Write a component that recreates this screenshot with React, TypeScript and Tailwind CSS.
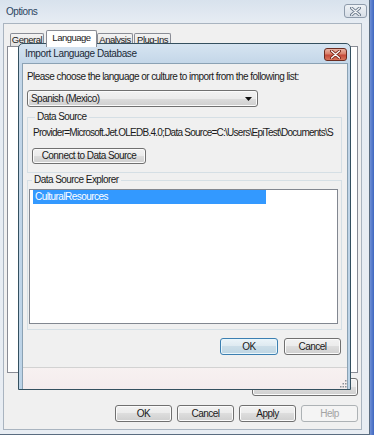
import React from 'react';

const btn =
  'flex items-center justify-center rounded-[3px] border border-[#707070] bg-[linear-gradient(to_bottom,#f2f2f2_0%,#ebebeb_50%,#dddddd_50%,#cfcfcf_100%)] shadow-[inset_0_0_0_1px_#fbfbfb] text-[#1a1a1a]';

const CloseGlyph = ({ fill, stroke }: { fill: string; stroke: string }) => (
  <svg width="11" height="9" viewBox="0 0 11 9">
    <path d="M1.5 1 L9.5 8 M9.5 1 L1.5 8" stroke={stroke} strokeWidth="3" strokeLinecap="round" />
    <path d="M1.5 1 L9.5 8 M9.5 1 L1.5 8" stroke={fill} strokeWidth="1.2" strokeLinecap="round" />
  </svg>
);

const Grip = () => (
  <svg width="7" height="9" viewBox="0 0 7 9">
    <rect x="5" y="1" width="1.5" height="1.5" fill="#8c9198" />
    <rect x="2.5" y="4" width="1.5" height="1.5" fill="#8c9198" />
    <rect x="5" y="4" width="1.5" height="1.5" fill="#8c9198" />
    <rect x="0" y="7" width="1.5" height="1.5" fill="#8c9198" />
    <rect x="2.5" y="7" width="1.5" height="1.5" fill="#8c9198" />
    <rect x="5" y="7" width="1.5" height="1.5" fill="#8c9198" />
  </svg>
);

const ImportDialog = () => (
  <div className="absolute left-[18px] top-[43px] flex h-[347px] w-[333px] flex-col rounded-t-[5px] border border-[#34505f] bg-[linear-gradient(to_bottom,#d6e4f1_0px,#c3d6e8_20px,#bcd3e7_100%)]">
    {/* title bar */}
    <div className="flex h-[19px] shrink-0 items-start">
      <span className="mt-[4px] pl-[6px] text-[10px] leading-[12px] tracking-[-0.4px] text-[#1b2a38]">Import Language Database</span>
      <div className="ml-auto mr-[3px] mt-[4px] flex h-[13px] w-[23px] items-center justify-center rounded-[3px] border border-[#6b2c20] bg-[linear-gradient(to_bottom,#eab3a4_0%,#d9806a_45%,#c4493a_55%,#d8765c_100%)]">
        <CloseGlyph fill="#ffffff" stroke="#7a2a1c" />
      </div>
    </div>
    {/* client */}
    <div className="ml-[3px] mr-[2px] flex flex-1 flex-col border-l border-r border-t border-[#8ba2b4] bg-[#f0f0f0]">
      <div className="pl-[4px] pr-[5px]">
        <div className="mt-[7px] h-[12px] leading-[12px]">
          Please choose the language or culture to import from the following list:
        </div>
        <div className={`${btn} mt-[7px] h-[17px] w-[231px] !justify-between pl-[3px] pr-[5px]`}>
          <span className="leading-[12px]">Spanish (Mexico)</span>
          <svg width="7" height="4" viewBox="0 0 7 4">
            <path d="M0 0 H7 L3.5 4 Z" fill="#111" />
          </svg>
        </div>

        <fieldset className="mt-[4px] w-[315px] border border-[#d5dfe5] pb-[8px] pl-[4px]">
          <legend className="ml-[3px] px-[2px] leading-[12px]">Data Source</legend>
          <div className="mt-[4px] w-[304px] overflow-hidden whitespace-nowrap pl-[1px] leading-[12px] tracking-[-0.75px]">
            Provider=Microsoft.Jet.OLEDB.4.0;Data Source=C:\Users\EpiTest\Documents\S
          </div>
          <div className={`${btn} mt-[9px] h-[16px] w-[114px]`}>
            <span className="leading-[12px]">Connect to Data Source</span>
          </div>
        </fieldset>

        <fieldset className="mt-[1px] w-[315px] border border-[#d5dfe5] pb-[5px] pl-[1px]">
          <legend className="ml-[3px] px-[2px] leading-[12px]">Data Source Explorer</legend>
          <div className="mt-[3px] h-[135px] w-[309px] border border-[#828790] bg-white">
            <div className="ml-[3px] h-[14px] w-[233px] bg-[#3399ff] pl-[2px] leading-[14px] text-white">
              CulturalResources
            </div>
          </div>
        </fieldset>
      </div>

      <div className="mt-[8px] flex justify-end gap-[6px] pr-[6px]">
        <div className="flex h-[17px] w-[58px] items-center justify-center rounded-[3px] border border-[#3c7fb1] bg-[linear-gradient(to_bottom,#ebf4f9_0%,#dde9f0_50%,#cbdde8_50%,#bfd6e3_100%)] shadow-[inset_0_0_0_1px_#e9f6fb]">
          <span className="leading-[12px]">OK</span>
        </div>
        <div className={`${btn} h-[17px] w-[57px]`}>
          <span className="leading-[12px]">Cancel</span>
        </div>
      </div>

      <div className="mt-[12px] flex flex-1 items-end justify-end border-t border-[#d2d2d2] bg-[linear-gradient(to_bottom,#f7f1f1,#f4eced)] pb-[1px]">
        <Grip />
      </div>
    </div>
  </div>
);

const Tab = ({ label, active, className }: { label: string; active?: boolean; className: string }) => (
  <div
    className={
      active
        ? `relative z-10 -mb-px flex h-[17px] items-start justify-center rounded-t-[2px] border border-b-0 border-[#898c95] bg-white pt-[1px] ${className}`
        : `flex h-[13px] items-center justify-center rounded-t-[2px] border border-b-0 border-[#898c95] bg-[linear-gradient(to_bottom,#f3f3f3,#e2e2e2)] ${className}`
    }
  >
    <span className="whitespace-nowrap text-[9.5px] leading-[12px] tracking-[-0.5px]">{label}</span>
  </div>
);

export default function App() {
  return (
    <div className="relative flex h-[435px] w-[374px] overflow-hidden bg-[#4d76c9] font-['Liberation_Sans',Arial,sans-serif] text-[10px] tracking-[-0.55px] text-[#1a1a1a]">
      {/* Options window */}
      <div className="flex h-[435px] w-[370px] flex-col border-b border-r border-[#5a6c80] bg-[linear-gradient(to_bottom,#d8e2ed_0px,#e6ecf3_22px,#e8edf3_100%)]">
        <div className="flex h-[23px] shrink-0 items-start">
          <span className="mt-[6px] pl-[6px] leading-[12px] tracking-[-0.45px] text-[#2a4460]">Options</span>
          <div className="ml-auto mr-[2px] mt-[4px] flex h-[14px] w-[23px] items-center justify-center rounded-[3px] border border-[#8e9bab] bg-[linear-gradient(to_bottom,#eef2f6,#d7dee7)]">
            <CloseGlyph fill="#f4f6f8" stroke="#6b7a8c" />
          </div>
        </div>

        <div className="mb-[4px] ml-[3px] mr-[7px] flex flex-1 flex-col border border-[#a9b4c0] bg-[#f0f0f0]">
          <div className="flex h-[22px] shrink-0 items-end pl-[6px]">
            <Tab label="General" className="w-[34px]" />
            <Tab label="Language" active className="ml-[2px] w-[51px]" />
            <Tab label="Analysis" className="w-[36px]" />
            <Tab label="Plug-Ins" className="ml-[1px] w-[37px]" />
          </div>
          <div className="ml-[3px] h-[327px] w-[351px] border border-[#898c95] bg-white" />

          <div className="mt-[5px] flex justify-end pr-[3px]">
            <div className={`${btn} h-[18px] w-[106px]`}>
              <span className="leading-[12px]">Restore Defaults</span>
            </div>
          </div>

          <div className="mt-[9px] flex justify-end gap-[5px] pr-[3px]">
            <div className={`${btn} h-[17px] w-[57px]`}>
              <span className="leading-[12px]">OK</span>
            </div>
            <div className={`${btn} h-[17px] w-[57px]`}>
              <span className="leading-[12px]">Cancel</span>
            </div>
            <div className={`${btn} h-[17px] w-[57px]`}>
              <span className="leading-[12px]">Apply</span>
            </div>
            <div className="flex h-[17px] w-[57px] items-center justify-center rounded-[3px] border border-[#adb2b5] bg-[#f4f4f4] text-[#a3a3a3]">
              <span className="leading-[12px]">Help</span>
            </div>
          </div>
        </div>
      </div>
      {/* desktop */}
      <div className="flex-1 bg-[linear-gradient(to_right,#6f8fd6,#3f67c0)]" />

      <ImportDialog />
    </div>
  );
}
